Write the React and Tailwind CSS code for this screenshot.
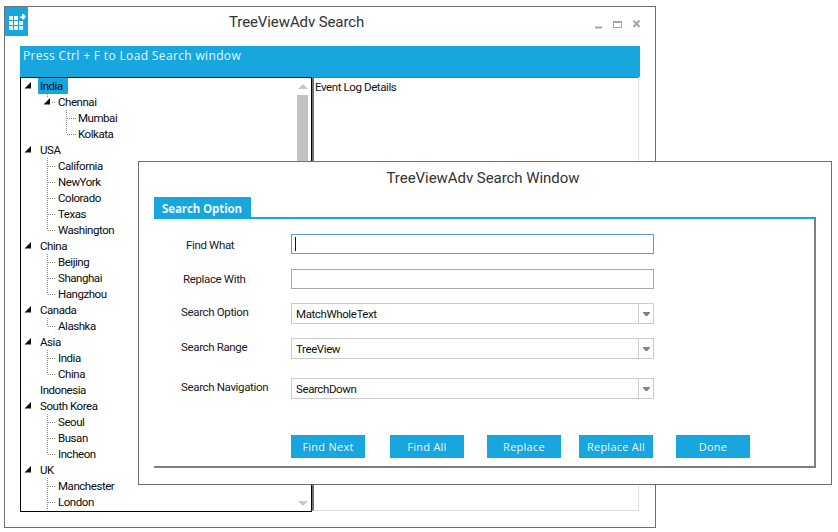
const TREE = [
  { text: 'India', level: 0, arrow: true, selected: true },
  { text: 'Chennai', level: 1, arrow: true, nextSibling: false },
  { text: 'Mumbai', level: 2, more: true },
  { text: 'Kolkata', level: 2 },
  { text: 'USA', level: 0, arrow: true },
  { text: 'California', level: 1, more: true },
  { text: 'NewYork', level: 1, more: true },
  { text: 'Colorado', level: 1, more: true },
  { text: 'Texas', level: 1, more: true },
  { text: 'Washington', level: 1 },
  { text: 'China', level: 0, arrow: true },
  { text: 'Beijing', level: 1, more: true },
  { text: 'Shanghai', level: 1, more: true },
  { text: 'Hangzhou', level: 1 },
  { text: 'Canada', level: 0, arrow: true },
  { text: 'Alashka', level: 1 },
  { text: 'Asia', level: 0, arrow: true },
  { text: 'India', level: 1, more: true },
  { text: 'China', level: 1 },
  { text: 'Indonesia', level: 0 },
  { text: 'South Korea', level: 0, arrow: true },
  { text: 'Seoul', level: 1, more: true },
  { text: 'Busan', level: 1, more: true },
  { text: 'Incheon', level: 1 },
  { text: 'UK', level: 0, arrow: true },
  { text: 'Manchester', level: 1, more: true },
  { text: 'London', level: 1, more: true },
]

function Connector({ row }) {
  const width = { 0: 17, 1: 35, 2: 55 }[row.level]
  const dots = { stroke: '#8a8a8a', strokeDasharray: '1 1', fill: 'none' }
  return (
    <svg width={width} height="16" className="shrink-0">
      {row.level === 0 && row.arrow && <polygon points="10,4 10,10.5 3.5,10.5" fill="#111" />}
      {row.level === 1 && row.arrow && (
        <>
          <line x1="26.5" y1="0" x2="26.5" y2="4" {...dots} />
          <line x1="31" y1="8.5" x2="35" y2="8.5" {...dots} />
          <polygon points="29,4 29,10.5 22.5,10.5" fill="#111" />
        </>
      )}
      {row.level === 1 && !row.arrow && (
        <>
          <line x1="26.5" y1="0" x2="26.5" y2={row.more ? 16 : 8} {...dots} />
          <line x1="27" y1="8.5" x2="35" y2="8.5" {...dots} />
        </>
      )}
      {row.level === 2 && (
        <>
          <line x1="45.5" y1="0" x2="45.5" y2={row.more ? 16 : 8} {...dots} />
          <line x1="46" y1="8.5" x2="55" y2="8.5" {...dots} />
        </>
      )}
    </svg>
  )
}

function TreeRow({ row }) {
  return (
    <div className="flex h-4 items-center">
      <Connector row={row} />
      <span className={`pl-[2px] pr-[5px] h-4 leading-4 font-['Roboto',sans-serif] text-[11.5px] tracking-[-0.45px] text-[#0a0a0a] ${row.selected ? 'bg-[#17a6de]' : ''}`}>
        {row.text}
      </span>
    </div>
  )
}

function AppIcon() {
  const cells = [[0, 0], [5, 0], [0, 5], [5, 5], [10, 5], [0, 10], [5, 10], [10, 10]]
  return (
    <div className="w-[23px] h-[29px] bg-[#17a6de] flex items-center justify-center">
      <svg width="18" height="18" viewBox="0 0 18 18">
        {cells.map(([x, y]) => (
          <rect key={`${x}-${y}`} x={x + 1} y={y + 3} width="4" height="4" fill="#fff" opacity={y === 10 ? 0.85 : 1} />
        ))}
        <path d="M12 3.5 L14 3.5 L14 1 L15.5 1 L17.5 3 L17.5 4.5 L15.5 6.5 L14 6.5 L14 5 L12 5 Z" fill="#fff" />
      </svg>
    </div>
  )
}

function WindowButtons() {
  return (
    <svg width="46" height="12" viewBox="0 0 46 12" className="shrink-0">
      <rect x="0" y="6.5" width="7" height="2" fill="#a5a5a5" />
      <rect x="18.5" y="1.5" width="8" height="6" fill="none" stroke="#a5a5a5" />
      <rect x="18" y="1" width="9" height="2" fill="#a5a5a5" />
      <path d="M38.5 0.5 L44.5 7 M44.5 0.5 L38.5 7" stroke="#a5a5a5" strokeWidth="2" fill="none" />
    </svg>
  )
}

function FieldLabel({ label, labelClass }) {
  return (
    <div className="w-[137px] shrink-0">
      <span className={`block font-['Roboto',sans-serif] text-[11.5px] tracking-[-0.35px] text-[#1a1a1a] ${labelClass}`}>{label}</span>
    </div>
  )
}

function TextRow({ label, labelClass, focused, rowClass }) {
  return (
    <div className={`flex items-center h-5 shrink-0 ${rowClass}`}>
      <FieldLabel label={label} labelClass={labelClass} />
      <div className={`w-[363px] h-5 border flex items-center ${focused ? 'border-[#5b9bd8]' : 'border-[#a9a9a9]'}`}>
        {focused && <div className="ml-[3px] w-px h-[14px] bg-[#111]" />}
      </div>
    </div>
  )
}

function ComboRow({ label, value, labelClass, rowClass }) {
  return (
    <div className={`flex items-center h-[21px] shrink-0 ${rowClass}`}>
      <FieldLabel label={label} labelClass={labelClass} />
      <div className="w-[363px] h-[21px] border border-[#cccccc] flex items-center">
        <span className="flex-1 pl-1 pt-[2px] font-['Roboto',sans-serif] text-[11.5px] tracking-[-0.4px] text-[#111]">{value}</span>
        <div className="w-[15px] h-full border-l border-[#cccccc] flex items-center justify-center">
          <svg width="7" height="4" viewBox="0 0 7 4">
            <path d="M0 0 H7 V1 L5 3 L4.5 4 H2.5 L2 3 L0 1 Z" fill="#808080" />
          </svg>
        </div>
      </div>
    </div>
  )
}

function ActionButton({ children }) {
  return (
    <div className="w-[74px] h-[23px] bg-[#17a6de] flex items-center justify-center pt-[2px] text-[11px] tracking-[0.25px] text-[#e6f6fd]">
      {children}
    </div>
  )
}

function MainWindow() {
  return (
    <div className="absolute left-[4px] top-[6px] w-[652px] h-[522px] bg-white border border-[#707070] flex flex-col">
      <div className="flex h-[39px] shrink-0">
        <AppIcon />
        <div className="ml-[201px] pt-[4px] font-['Roboto',sans-serif] text-[15px] tracking-[-0.1px] text-[#333]">TreeViewAdv Search</div>
        <div className="ml-auto pt-[13px] pr-[14px]"><WindowButtons /></div>
      </div>
      <div className="ml-[15px] w-[620px] h-[31px] shrink-0 bg-[#17a6de] pl-[3px] pt-[1px] text-[12px] leading-[17px] tracking-[0.35px] text-[#e6f6fd]">
        Press Ctrl + F to Load Search window
      </div>
      <div className="ml-[15px] flex">
        <div className="w-[292px] h-[435px] border border-black flex">
          <div className="flex-1 flex flex-col overflow-hidden">
            {TREE.map((row, i) => <TreeRow key={i} row={row} />)}
          </div>
          <div className="w-[11px] mr-[3px] flex flex-col items-center justify-between pt-[6px] pb-[5px]">
            <svg width="10" height="5" viewBox="0 0 10 5"><polygon points="5,0 10,5 0,5" fill="#c8c8c8" /></svg>
            <div className="w-[11px] h-[340px] mt-[6px] mb-auto bg-[#c2c2c2]" />
            <svg width="10" height="5" viewBox="0 0 10 5"><polygon points="0,0 10,0 5,5" fill="#c8c8c8" /></svg>
          </div>
        </div>
        <div className="w-[327px] h-[434px] border-l-2 border-l-[#707070] border-t border-t-[#707070] border-r border-r-[#e0e0e0] border-b border-b-[#e0e0e0] pl-px pt-px font-['Roboto',sans-serif] text-[11.5px] leading-4 tracking-[-0.4px] text-[#111]">
          Event Log Details
        </div>
      </div>
    </div>
  )
}

function SearchWindow() {
  return (
    <div className="absolute left-[138px] top-[161px] w-[694px] h-[324px] bg-white border border-[#707070] flex flex-col">
      <div className="h-[35px] shrink-0 flex justify-center pt-[5px] pr-[4px] font-['Roboto',sans-serif] text-[15px] tracking-[-0.05px] text-[#333]">
        TreeViewAdv Search Window
      </div>
      <div className="ml-[15px] w-[662px] border-b-2 border-b-[#17a6de] shrink-0">
        <div className="w-[97px] h-[20px] bg-[#17a6de] pl-2 text-[11.5px] leading-[24px] font-bold tracking-[-0.1px] text-[#e6f6fd]">
          Search Option
        </div>
      </div>
      <div className="ml-[15px] w-[662px] h-[249px] border-r-2 border-b-2 border-[#808080] pt-[15px] flex flex-col">
        <TextRow label="Find What" labelClass="pl-[32px] pt-[3px]" focused />
        <TextRow label="Replace With" labelClass="pl-[29px] pt-[1px]" rowClass="mt-[15px]" />
        <ComboRow label="Search Option" value="MatchWholeText" labelClass="pl-[27px] pb-[1px]" rowClass="mt-[14px]" />
        <ComboRow label="Search Range" value="TreeView" labelClass="pl-[27px] pb-[2px]" rowClass="mt-[14px]" />
        <ComboRow label="Search Navigation" value="SearchDown" labelClass="pl-[27px] pb-[2px]" rowClass="mt-[19px]" />
        <div className="ml-[137px] mt-[36px] flex">
          <ActionButton>Find Next</ActionButton>
          <div className="ml-[25px]"><ActionButton>Find All</ActionButton></div>
          <div className="ml-[23px]"><ActionButton>Replace</ActionButton></div>
          <div className="ml-[18px]"><ActionButton>Replace All</ActionButton></div>
          <div className="ml-[23px]"><ActionButton>Done</ActionButton></div>
        </div>
      </div>
    </div>
  )
}

export default function App() {
  return (
    <div className="relative w-[838px] h-[532px] bg-white overflow-hidden font-['Open_Sans',sans-serif]">
      <MainWindow />
      <SearchWindow />
    </div>
  )
}
